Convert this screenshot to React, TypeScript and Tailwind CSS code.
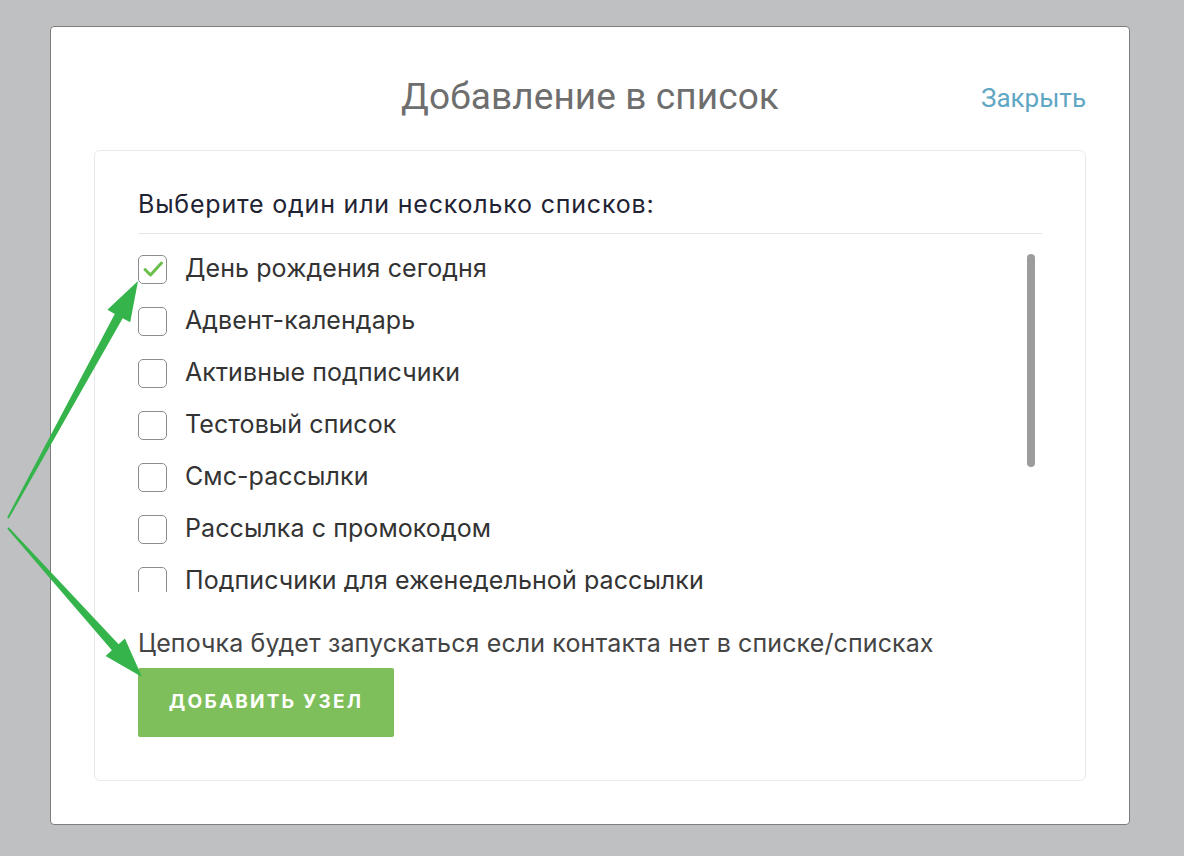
import React from "react";

const items = [
  "День рождения сегодня",
  "Адвент-календарь",
  "Активные подписчики",
  "Тестовый список",
  "Смс-рассылки",
  "Рассылка с промокодом",
  "Подписчики для еженедельной рассылки",
];

function arrowPoints(tx: number, ty: number, hx: number, hy: number) {
  const dx = hx - tx;
  const dy = hy - ty;
  const len = Math.hypot(dx, dy);
  const ux = dx / len;
  const uy = dy / len;
  const nx = -uy;
  const ny = ux;
  const headLen = 40;
  const headW = 13;
  const shaftTail = 1;
  const shaftHead = 4.5;
  const bx = hx - ux * headLen;
  const by = hy - uy * headLen;
  const pts = [
    [tx + nx * shaftTail, ty + ny * shaftTail],
    [bx + nx * shaftHead, by + ny * shaftHead],
    [bx + nx * headW, by + ny * headW],
    [hx, hy],
    [bx - nx * headW, by - ny * headW],
    [bx - nx * shaftHead, by - ny * shaftHead],
    [tx - nx * shaftTail, ty - ny * shaftTail],
  ];
  return pts.map((p) => p.map((v) => v.toFixed(1)).join(",")).join(" ");
}

function Checkbox({ checked }: { checked?: boolean }) {
  return (
    <div className="w-[29px] h-[29px] shrink-0 rounded-[5px] border border-[#8c8c8c] bg-white flex items-center justify-center">
      {checked && (
        <svg width="22" height="18" viewBox="0 0 22 18">
          <path d="M3 9.5 L8.5 15 L19.5 3" fill="none" stroke="#6abf4b" strokeWidth="3" strokeLinecap="round" strokeLinejoin="round" />
        </svg>
      )}
    </div>
  );
}

export default function App() {
  return (
    <div
      className="relative w-[1184px] h-[856px] bg-[#bfc0c2] pt-[26px] pl-[50px] overflow-hidden"
      style={{ fontFamily: "Inter, 'Noto Sans', sans-serif" }}
    >
      <div className="w-[1080px] h-[799px] bg-white border border-[#7d7d7d] rounded-[4px] px-[43px] flex flex-col">
        <div className="relative h-[123px] flex items-center justify-center shrink-0">
          <div className="text-[37px] tracking-[0.1px] text-[#6e6e6e] pt-[16px]" style={{ fontFamily: "Roboto, 'Noto Sans', sans-serif" }}>
            Добавление в список
          </div>
          <div
            className="absolute right-0 top-[52px] text-[26px] text-[#5fa7c4]"
            style={{ fontFamily: "Roboto, 'Noto Sans', sans-serif" }}
          >
            Закрыть
          </div>
        </div>
        <div className="h-[631px] border border-[#e9e9e9] rounded-[6px] pl-[43px] pr-[43px] pt-[38px] flex flex-col">
          <div className="text-[25px] tracking-[0.8px] text-[#1f2333] h-[31px] leading-[31px] whitespace-nowrap">
            Выберите один или несколько списков:
          </div>
          <div className="h-px bg-[#e6e6e6] mt-[13px]" />
          <div className="flex h-[349px] mt-[9px]">
            <div className="flex-1 overflow-hidden">
              {items.map((t, i) => (
                <div key={i} className="h-[52px] flex items-center gap-[18px] shrink-0">
                  <Checkbox checked={i === 0} />
                  <span className="text-[25px] tracking-[0.08px] text-[#333333] whitespace-nowrap">{t}</span>
                </div>
              ))}
            </div>
            <div className="w-[8px] mr-[7px] pt-[11px]">
              <div className="w-[8px] h-[213px] rounded-full bg-[#9c9c9c]" />
            </div>
          </div>
          <div className="text-[25px] tracking-[0.12px] text-[#444444] mt-[36px] leading-[30px] whitespace-nowrap">
            Цепочка будет запускаться если контакта нет в списке/списках
          </div>
          <div className="mt-[10px]">
            <button className="w-[256px] h-[69px] bg-[#7fbf5b] rounded-[2px] text-white font-bold text-[19px] tracking-[2.2px]">
              ДОБАВИТЬ УЗЕЛ
            </button>
          </div>
        </div>
      </div>
      <svg className="absolute left-0 top-0 pointer-events-none" width="1184" height="856">
        <polygon points={arrowPoints(8, 518, 138, 281)} fill="#34b44a" />
        <polygon points={arrowPoints(8, 528, 142, 677)} fill="#34b44a" />
      </svg>
    </div>
  );
}
